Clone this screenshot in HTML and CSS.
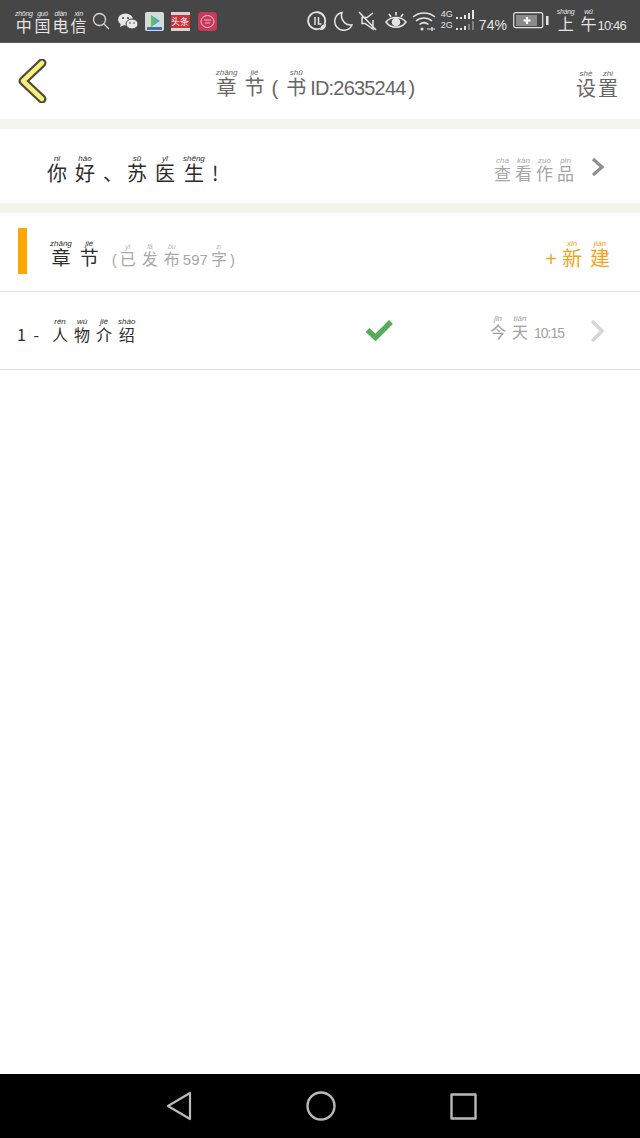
FILE: index.html
```html
<!DOCTYPE html>
<html lang="zh">
<head>
  <meta charset="UTF-8" />
  <meta name="viewport" content="width=device-width, initial-scale=1.0"/>
  <title>章节</title>
  <link rel="stylesheet" href="styles.css">
</head>
<body>
  <div class="phone">
    <!-- status bar -->
    <div class="status-bar">
      <div class="status-left">
        <span class="carrier"><ruby>中<rt>zhōng</rt></ruby><ruby>国<rt>guó</rt></ruby><ruby>电<rt>diàn</rt></ruby><ruby>信<rt>xìn</rt></ruby></span>
        <svg class="ico-search" viewBox="0 0 18 18" fill="none" stroke="#d8d8d8" stroke-width="1.3"><circle cx="7.5" cy="7.5" r="6"/><path d="M12 12l5 5"/></svg>
        <svg class="ico-wechat" viewBox="0 0 20 17" fill="#e8e8e8"><ellipse cx="7.5" cy="6.5" rx="7.5" ry="6"/><path d="M3 10l-1 4 4-2z"/><ellipse cx="14" cy="11" rx="6" ry="5" stroke="#464646"/><circle cx="5" cy="5" r="1" fill="#464646"/><circle cx="10" cy="5" r="1" fill="#464646"/><circle cx="12" cy="10" r=".8" fill="#464646"/><circle cx="16" cy="10" r=".8" fill="#464646"/></svg>
        <svg class="ico-app" viewBox="0 0 19 19"><rect width="19" height="19" rx="2" fill="#d5dcd8"/><path d="M6 3l9 6-9 6z" fill="#3fa9e0"/><path d="M6 3l5 6-5 6z" fill="#6cc04a"/><rect x="2" y="15" width="15" height="3" fill="#3d6fa8"/></svg>
        <span class="app-toutiao">头条</span>
        <svg class="ico-app" viewBox="0 0 19 19" fill="none"><rect width="19" height="19" rx="4" fill="#c8395c"/><ellipse cx="9.5" cy="9.5" rx="6.5" ry="6" stroke="#f3c3cd" stroke-width="1"/><path d="M6 8h7M7 11h5" stroke="#f3c3cd" stroke-width=".9"/></svg>
      </div>
      <div class="status-right">
        <svg class="ico-data" viewBox="0 0 20 20" fill="none" stroke="#e4e4e4"><path d="M17.5 13A8.5 8.5 0 1 0 13 17.500" stroke-width="1.800"/><path d="M8 6v8M11.500 6v7h3" stroke-width="1.500"/><path d="M13 19c0-4 3-6 6-6 0 4-2 6-6 6z" fill="#e4e4e4" stroke="none"/></svg>
        <svg class="ico-moon" viewBox="0 0 20 20" fill="none" stroke="#e4e4e4" stroke-width="1.500"><path d="M9 1.500A9 9 0 1 0 19 14 9.500 9.500 0 0 1 9 1.500z"/></svg>
        <svg class="ico-mute" viewBox="0 0 19 20" fill="none" stroke="#e4e4e4" stroke-width="1.500"><path d="M1 1l17 18M15 2L9 6.500H4v6h3l8 5.500V9"/></svg>
        <svg class="ico-eye" viewBox="0 0 22 20" fill="none" stroke="#e4e4e4" stroke-width="1.600"><path d="M1 11c5-6 15-6 20 0-5 7-15 7-20 0z"/><circle cx="11" cy="11" r="3.500" fill="#e4e4e4"/><path d="M4 3l2 3M11 1v3.500M18 3l-2 3"/></svg>
        <svg class="ico-wifi" viewBox="0 0 24 20" fill="none" stroke="#e4e4e4" stroke-width="1.500"><path d="M1 6c6-5.500 16-5.500 22 0M4 10c4.500-4 11.500-4 16 0M7.500 13.500c3-2.500 6-2.500 9 0"/><circle cx="10" cy="18" r="1.500" fill="#e4e4e4" stroke="none"/><path d="M15 18h8M20 16v4" stroke-width="1.200"/></svg>
        <div class="signal">
          <div class="signal-row"><span class="net">4G</span><i class="dot"></i><i class="dot"></i><i class="bar b1"></i><i class="bar b2"></i><i class="bar b3"></i></div>
          <div class="signal-row"><span class="net">2G</span><i class="dot"></i><i class="dot"></i><i class="bar b1"></i><i class="bar b2 dim"></i><i class="bar b3 dim"></i></div>
        </div>
        <span class="batt-pct">74%</span>
        <svg class="ico-batt" viewBox="0 0 36 17" fill="none"><rect x=".7" y=".7" width="29" height="15" rx="2" stroke="#e4e4e4" stroke-width="1.200"/><rect x="3" y="3" width="21" height="11" fill="#8a8a8a"/><path d="M14 5v7M10.500 8.500h7" stroke="#fff" stroke-width="2.200"/><rect x="33" y="4" width="2.500" height="9" fill="#e4e4e4"/></svg>
        <span class="clock"><ruby>上<rt>shàng</rt></ruby><ruby>午<rt>wǔ</rt></ruby><span class="clock-num">10:46</span></span>
      </div>
    </div>

    <!-- header -->
    <header class="top-bar">
      <svg class="back" viewBox="0 0 30 44"><path d="M24 4L5 22l19 18" fill="none" stroke="#4d4a3a" stroke-width="9" stroke-linecap="round" stroke-linejoin="round"/><path d="M24 4L5 22l19 18" fill="none" stroke="#f6f07c" stroke-width="4.500" stroke-linecap="round" stroke-linejoin="round"/></svg>
      <div class="title"><ruby>章<rt>zhāng</rt></ruby><ruby>节<rt>jié</rt></ruby><span class="paren">(</span><ruby>书<rt>shū</rt></ruby><span class="title-id">ID:2635244</span><span class="paren">)</span></div>
      <div class="settings"><ruby>设<rt>shè</rt></ruby><ruby>置<rt>zhì</rt></ruby></div>
    </header>
    <div class="gap"></div>

    <div class="row greet-row">
      <div class="greet"><ruby>你<rt>nǐ</rt></ruby><ruby>好<rt>hǎo</rt></ruby><span class="comma">、</span><ruby>苏<rt>sū</rt></ruby><ruby>医<rt>yī</rt></ruby><ruby>生<rt>shēng</rt></ruby><span>!</span></div>
      <div class="view-works">
        <span class="view-text"><ruby>查<rt>chá</rt></ruby><ruby>看<rt>kàn</rt></ruby><ruby>作<rt>zuò</rt></ruby><ruby>品<rt>pǐn</rt></ruby></span>
        <svg class="chev" viewBox="0 0 14 20" fill="none" stroke="#8f8f8f" stroke-width="3.200"><path d="M2 2l9 8-9 8"/></svg>
      </div>
    </div>
    <div class="gap"></div>

    <div class="row section-row">
      <div class="section-left">
        <i class="accent"></i>
        <span class="section-name"><ruby>章<rt>zhāng</rt></ruby><ruby>节<rt>jié</rt></ruby></span>
        <span class="section-count">(<ruby>已<rt>yǐ</rt></ruby><ruby>发<rt>fā</rt></ruby><ruby>布<rt>bù</rt></ruby>597<ruby>字<rt>zì</rt></ruby>)</span>
      </div>
      <div class="new-btn"><span class="plus">+</span><ruby>新<rt>xīn</rt></ruby><ruby>建<rt>jiàn</rt></ruby></div>
    </div>

    <div class="row chapter-row">
      <div class="chapter-name"><span class="chapter-no">1 -</span><ruby>人<rt>rén</rt></ruby><ruby>物<rt>wù</rt></ruby><ruby>介<rt>jiè</rt></ruby><ruby>绍<rt>shào</rt></ruby></div>
      <svg class="check" viewBox="0 0 28 22" fill="none" stroke="#55ad5a" stroke-width="5.500"><path d="M2.500 11l8 7.500L26 3"/></svg>
      <div class="chapter-time">
        <span class="time-text"><ruby>今<rt>jīn</rt></ruby><ruby>天<rt>tiān</rt></ruby><span class="time-num">10:15</span></span>
        <svg class="chev" viewBox="0 0 14 24" fill="none" stroke="#d6d6d6" stroke-width="3.500"><path d="M2 2l10 10L2 22"/></svg>
      </div>
    </div>

    <main class="blank"></main>

    <!-- android nav -->
    <nav class="nav-bar">
      <svg viewBox="0 0 26 30" fill="none" stroke="#b9b9b9" stroke-width="2.200" stroke-linejoin="round"><path d="M24 2L2 15l22 13z"/></svg>
      <svg viewBox="0 0 30 30" fill="none" stroke="#b9b9b9" stroke-width="2.400"><circle cx="15" cy="15" r="13.500"/></svg>
      <svg viewBox="0 0 27 27" fill="none" stroke="#b9b9b9" stroke-width="2.400" stroke-linejoin="round"><rect x="1.500" y="1.500" width="24" height="24"/></svg>
    </nav>
  </div>
</body>
</html>
```

FILE: styles.css
```css
* {
  box-sizing: border-box;
  margin: 0;
  padding: 0;
}

html,
body {
  height: 100%;
}

body {
  background: #fff;
  font-family: "Noto Sans CJK SC", "Noto Sans", sans-serif;
  overflow: hidden;
}

.phone {
  display: flex;
  flex-direction: column;
  height: 1138px;
  width: 640px;
}

ruby {
  ruby-position: over;
}

rt {
  font-family: "Liberation Sans", sans-serif;
  font-size: 8px;
  font-style: italic;
  line-height: 14px;
}

svg {
  display: block;
  flex: none;
}

/* status bar */
.status-bar {
  align-items: center;
  background: #464646;
  border-bottom: 1px solid #5c5c5c;
  color: #e4e4e4;
  display: flex;
  flex: none;
  height: 43px;
  justify-content: space-between;
  padding: 0 14px 0 15px;
}

.status-left,
.status-right {
  align-items: center;
  display: flex;
}

.carrier {
  font-size: 16px;
  line-height: 20px;
  margin-right: 3px;
  margin-top: 2px;
  white-space: nowrap;
}

.carrier ruby {
  margin-right: 2px;
}

.carrier rt,
.clock rt {
  font-size: 7px;
  letter-spacing: -0.3px;
  line-height: 10px;
}

.ico-search {
  height: 18px;
  margin-right: 8px;
  width: 18px;
}

.ico-wechat {
  height: 17px;
  margin-right: 7px;
  width: 20px;
}

.ico-app {
  height: 19px;
  margin-right: 7px;
  width: 19px;
}

.app-toutiao {
  background: #d8d4d2;
  border-bottom: 3px solid #d8d4d2;
  border-top: 3px solid #d8d4d2;
  box-shadow: inset 0 0 0 9px #c9323a;
  color: #fff;
  font-size: 9px;
  height: 19px;
  line-height: 13px;
  margin-right: 8px;
  text-align: center;
  width: 19px;
}

.ico-data {
  height: 20px;
  margin-right: 6px;
  width: 20px;
}

.ico-moon {
  height: 20px;
  margin-right: 5px;
  width: 20px;
}

.ico-mute {
  height: 20px;
  margin-right: 8px;
  width: 19px;
}

.ico-eye {
  height: 20px;
  margin-right: 5px;
  width: 22px;
}

.ico-wifi {
  height: 20px;
  margin-right: 5px;
  width: 24px;
}

.signal {
  display: flex;
  flex-direction: column;
  gap: 1px;
  margin-right: 4px;
  margin-top: -4px;
  width: 34px;
}

.signal-row {
  align-items: flex-end;
  display: flex;
  gap: 2px;
  height: 10px;
}

.net {
  font-family: "Liberation Sans", sans-serif;
  font-size: 9px;
  line-height: 10px;
  margin-right: 1px;
}

.dot {
  background: #e4e4e4;
  height: 2px;
  width: 2px;
}

.bar {
  background: #e4e4e4;
  width: 2px;
}

.b1 {
  height: 4px;
}

.b2 {
  height: 6px;
}

.b3 {
  height: 9px;
}

.dim {
  background: #808080;
}

.batt-pct {
  font-family: "Liberation Sans", sans-serif;
  font-size: 14px;
  margin-right: 8px;
  margin-top: 8px;
  width: 26px;
}

.ico-batt {
  height: 17px;
  margin-right: 8px;
  margin-top: -1px;
  width: 36px;
}

.clock {
  font-size: 16px;
  line-height: 20px;
  margin-top: 2px;
  white-space: nowrap;
}

.clock ruby {
  margin-right: 6px;
}

.clock-num {
  font-family: "Liberation Sans", sans-serif;
  font-size: 13px;
  letter-spacing: -0.8px;
  margin-left: -5px;
}

/* top bar */
.top-bar {
  align-items: center;
  display: flex;
  flex: none;
  height: 76px;
  justify-content: space-between;
  padding: 0 22px 0 18px;
}

.back {
  height: 44px;
  margin-top: -1px;
  width: 30px;
}

.title {
  color: #666;
  font-size: 20px;
  line-height: 24px;
  margin-left: 7px;
  margin-top: 6px;
  white-space: nowrap;
}

.title ruby {
  margin-right: 7px;
}

.title ruby:has(+ .title-id) {
  margin-right: 4px;
}

.paren {
  font-family: "Liberation Sans", sans-serif;
  font-weight: 300;
  margin: 0 8px 0 0;
}

.paren:last-child {
  margin-right: 0;
}

.title-id {
  font-family: "Liberation Sans", sans-serif;
  font-size: 20px;
  letter-spacing: -0.8px;
  margin-right: 3px;
}

.settings {
  color: #666;
  font-size: 20px;
  line-height: 24px;
  margin-top: 6px;
}

.settings ruby + ruby {
  margin-left: 2px;
}

.gap {
  background: #f4f3ee;
  flex: none;
  height: 10px;
}

/* rows */
.row {
  align-items: center;
  display: flex;
  flex: none;
  justify-content: space-between;
}

.greet-row {
  height: 74px;
  padding: 0 35px 0 47px;
}

.greet {
  color: #2c2c2c;
  font-size: 20px;
  line-height: 24px;
  margin-top: 6px;
  white-space: nowrap;
}

.greet ruby {
  margin-right: 8px;
}

.comma {
  margin-right: 4px;
}

.view-works {
  align-items: center;
  display: flex;
  gap: 13px;
}

.view-text {
  color: #a5a5a5;
  font-size: 17px;
  line-height: 20px;
  margin-top: 6px;
}

.view-text ruby {
  margin-right: 4px;
}

.view-works .chev {
  height: 20px;
  margin-top: 2px;
  width: 14px;
}

.section-row {
  border-bottom: 1px solid #e2e2e2;
  height: 79px;
  padding: 0 30px 0 18px;
}

.section-left {
  align-items: center;
  display: flex;
}

.accent {
  background: #ffa600;
  height: 46px;
  margin-right: 23px;
  margin-top: -2px;
  width: 9px;
}

.section-name {
  color: #2c2c2c;
  font-size: 19px;
  line-height: 24px;
  margin-right: 5px;
  margin-top: 3px;
  white-space: nowrap;
}

.section-name ruby {
  margin-right: 8px;
}

.section-count {
  color: #a8a8a8;
  font-family: "Liberation Sans", sans-serif;
  font-size: 15px;
  line-height: 20px;
  margin-top: 8px;
  white-space: nowrap;
}

.section-count ruby {
  font-family: "Noto Sans CJK SC", sans-serif;
  font-size: 16px;
  margin: 0 3px;
}

.section-count rt {
  color: #b5b5b5;
  font-size: 7px;
}

.new-btn {
  color: #f2a31b;
  font-size: 20px;
  line-height: 24px;
  margin-top: 5px;
  white-space: nowrap;
}

.new-btn ruby + ruby {
  margin-left: 8px;
}

.plus {
  font-family: "Liberation Sans", sans-serif;
  margin-right: 5px;
}

.chapter-row {
  border-bottom: 1px solid #e2e2e2;
  height: 78px;
  padding: 0 36px 0 17px;
}

.chapter-name {
  color: #2c2c2c;
  font-size: 16px;
  line-height: 20px;
  margin-top: 0;
  white-space: nowrap;
  width: 348px;
}

.chapter-name ruby {
  margin-right: 6px;
}

.chapter-no {
  margin-right: 13px;
  word-spacing: 4px;
}

.check {
  height: 22px;
  margin-right: auto;
  margin-top: -2px;
  width: 28px;
}

.chapter-time {
  align-items: center;
  display: flex;
  gap: 26px;
}

.time-text {
  color: #a2a2a2;
  font-size: 16px;
  line-height: 20px;
  margin-top: -4px;
  white-space: nowrap;
}

.time-text ruby {
  margin-right: 6px;
}

.time-num {
  font-family: "Liberation Sans", sans-serif;
  font-size: 14px;
  letter-spacing: -1px;
  margin-left: 0;
}

.chapter-time .chev {
  height: 24px;
  width: 14px;
}

.blank {
  background: #fff;
  flex: 1;
}

/* nav bar */
.nav-bar {
  align-items: center;
  background: #000;
  display: flex;
  flex: none;
  gap: 114px;
  height: 64px;
  justify-content: center;
  padding-left: 2px;
}

.nav-bar svg:nth-child(1) {
  height: 30px;
  width: 26px;
}

.nav-bar svg:nth-child(2) {
  height: 30px;
  width: 30px;
}

.nav-bar svg:nth-child(3) {
  height: 27px;
  width: 27px;
}
```
